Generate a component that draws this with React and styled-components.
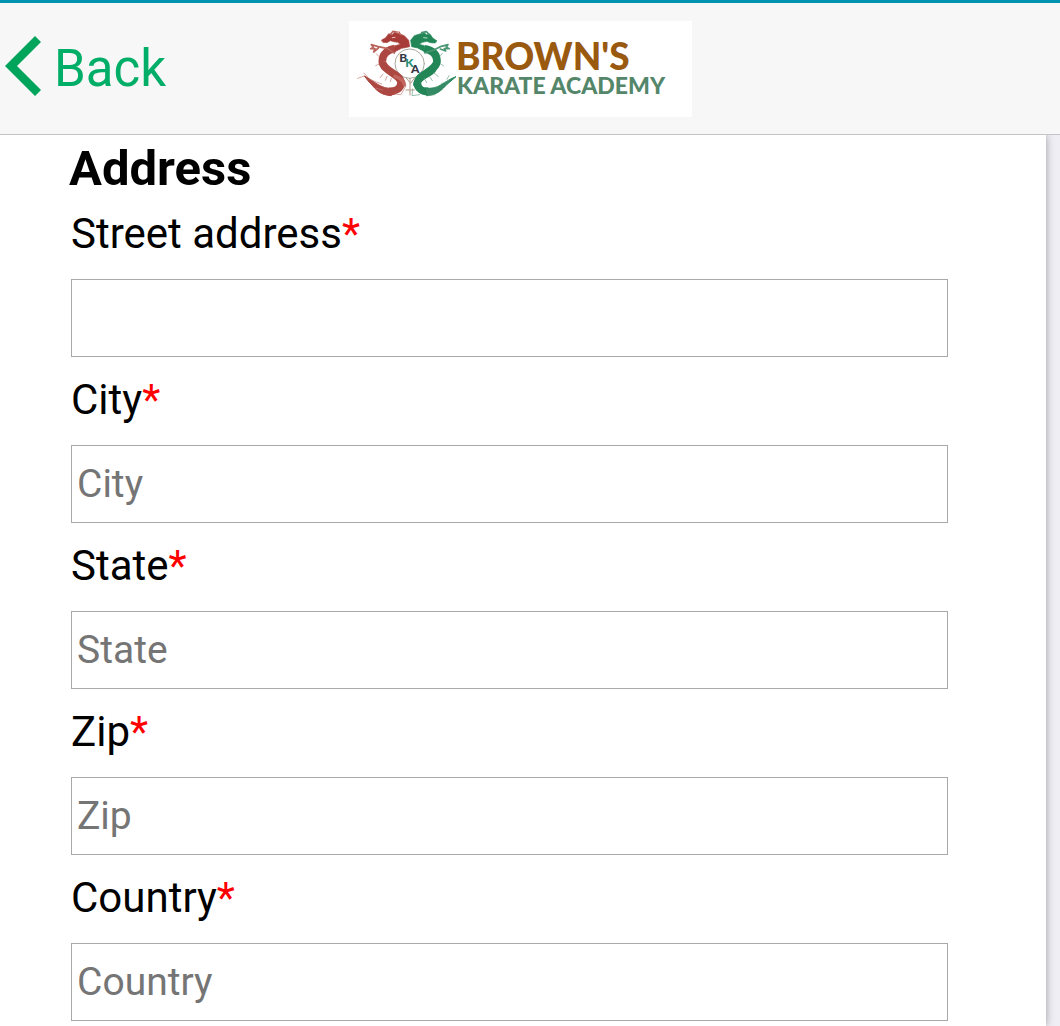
import React from "react";
import styled, { createGlobalStyle } from "styled-components";

const GlobalStyle = createGlobalStyle`
  *, *::before, *::after { box-sizing: border-box; }
  body {
    margin: 0;
    background: #efeef4;
    color: #000;
    font-family: Roboto, "Liberation Sans", sans-serif;
  }
`;

const Page = styled.div`
  display: flex;
  flex-direction: column;
  height: 100vh;
  overflow: hidden;
`;

const Header = styled.header`
  position: relative;
  z-index: 1;
  display: grid;
  grid-template-columns: 1fr auto 1fr;
  align-items: center;
  flex: none;
  height: 135px;
  padding-right: 20px;
  border-top: 3px solid #0093b2;
  border-bottom: 1px solid #c4c4c4;
  background: #f7f7f7;
`;

const BackButton = styled.button`
  display: flex;
  align-items: center;
  justify-self: start;
  gap: 12px;
  padding: 0 0 0 5px;
  border: 0;
  background: none;
  color: #00ae68;
  font: 400 51px/60px Roboto, sans-serif;
  cursor: pointer;
`;

const Logo = styled.svg`
  display: block;
  width: 343px;
  height: 96px;
  background: #fff;
`;

const LogoText = styled.text`
  font-family: Lato, sans-serif;
  font-weight: 900;
  font-size: ${(p) => p.$size}px;
`;

const Sheet = styled.main`
  flex: 1;
  min-height: 0;
  overflow: hidden;
  margin-right: 14px;
  padding: 0 98px 0 71px;
  background: #fff;
  box-shadow: 0 0 8px rgba(0, 0, 0, 0.35);
`;

const Title = styled.h1`
  margin: 0 0 0 -2px;
  font-size: 49px;
  font-weight: 700;
  line-height: 68px;
`;

const Field = styled.div`
  display: flex;
  flex-direction: column;
  gap: 17px;
  padding: 3px 0 12px;
`;

const Label = styled.label`
  font-size: 42px;
  line-height: 56px;
`;

const Required = styled.span`
  color: #f00;
`;

const Input = styled.input`
  width: 100%;
  height: 78px;
  padding: 0 5px;
  border: 1px solid #a9a9a9;
  border-radius: 0;
  background: #fff;
  color: #000;
  font: 400 39px/46px Roboto, sans-serif;

  &::placeholder {
    color: #757575;
    opacity: 1;
  }
`;

const fields = [
  { id: "street", label: "Street address", placeholder: "" },
  { id: "city", label: "City", placeholder: "City" },
  { id: "state", label: "State", placeholder: "State" },
  { id: "zip", label: "Zip", placeholder: "Zip" },
  { id: "country", label: "Country", placeholder: "Country" },
];

function Chevron() {
  return (
    <svg width="37" height="66" viewBox="0 0 37 66" aria-hidden="true">
      <path d="M30 0 36 6 12 30 36 54 30 60 0 30Z" fill="#00a45b" />
    </svg>
  );
}

function LogoMark() {
  return (
    <g transform="translate(-4 -6) scale(.33333)" fill="none" strokeLinecap="round" strokeLinejoin="round">
      <circle cx="194" cy="146" r="44" fill="#fff" stroke="#a8a99a" strokeWidth="3" />
      <g stroke="#ad4742">
        <path d="M150 101C128 104 111 117 112 140C114 168 168 178 168 203C168 221 150 229 132 230" strokeWidth="23" strokeLinecap="butt" />
        <path d="M150 184C166 190 178 196 178 210" strokeWidth="10" stroke="#c2655d" />
        <path d="M144 219C108 226 84 194 58 183L72 201C88 215 98 240 138 242Z" fill="#ad4742" strokeWidth="3" />
        <path d="M110 75 122 68 131 56 142 59 148 52 162 56 178 62 191 76 194 95 180 98 170 100 146 112 150 92 166 88 158 82 146 80 136 77 126 83 114 82Z" fill="#a83c39" strokeWidth="2" />
        <path d="M137 58 144 49 156 51M166 59 162 51M97 94 128 101 148 114M97 94 79 89 85 97 77 101 90 101 86 111 100 99" strokeWidth="5" stroke="#b9655c" />
        <path d="M142 68 150 67" stroke="#e9c0b8" strokeWidth="3" />
        <path d="M74 193 94 201 110 207M58 183 38 190M67 185 57 174M101 124 94 116M101 148 92 152M114 177 105 188M126 184 121 196M139 190 136 200M151 237 168 239 183 212M113 225 94 220" strokeWidth="2" stroke="#c07a72" />
      </g>
      <g stroke="#238657">
        <path d="M238 101C262 105 276 117 276 139C274 168 220 178 217 203C217 220 232 230 250 230" strokeWidth="23" strokeLinecap="butt" />
        <path d="M264 166C250 182 222 186 213 207" strokeWidth="17" />
        <path d="M242 219C282 226 296 198 333 185L306 208C293 222 278 240 246 242Z" fill="#348a65" strokeWidth="3" />
        <path d="M275 77 263 69 255 57 244 59 238 53 224 57 208 62 197 76 200 95 218 99 242 112 238 92 222 88 232 82 246 79 256 83 270 84Z" fill="#238657" strokeWidth="2" />
        <path d="M252 58 244 50 230 53M240 114 268 104 289 94M289 94 309 89 304 97 313 101 298 101 302 108 286 102" strokeWidth="5" stroke="#4a9673" />
        <path d="M236 68 246 69" stroke="#b5dccb" strokeWidth="3" />
        <path d="M306 193 312 182M288 207 312 196M286 123 292 115M286 146 296 153M267 174 280 185M253 184 262 197M238 190 245 203M203 221 201 242 224 239M249 242 270 239" strokeWidth="2" stroke="#63a486" />
      </g>
      <path d="M195 190V240M183 225 208 225M184 190 197 205 208 190" stroke="#b09a88" strokeWidth="3" />
      <g stroke="none" fontFamily="Lato" fontWeight="900" fontSize="36">
        <text x="163" y="140" fill="#333942">B</text>
        <text x="181" y="157" fill="#258e75">K</text>
        <text x="198" y="173" fill="#33343e">A</text>
      </g>
    </g>
  );
}

export default function App() {
  return (
    <>
      <GlobalStyle />
      <Page>
        <Header>
          <BackButton type="button">
            <Chevron />
            Back
          </BackButton>
          <Logo viewBox="0 0 343 96" role="img" aria-label="Brown's Karate Academy">
            <LogoMark />
            <LogoText x="107" y="49" $size={37} fill="#99590f">BROWN'S</LogoText>
            <LogoText x="108" y="73" $size={23} fill="#54866a">KARATE ACADEMY</LogoText>
          </Logo>
        </Header>
        <Sheet>
          <Title>Address</Title>
          <form>
            {fields.map((f) => (
              <Field key={f.id}>
                <Label htmlFor={f.id}>
                  {f.label}
                  <Required>*</Required>
                </Label>
                <Input id={f.id} name={f.id} type="text" placeholder={f.placeholder} required />
              </Field>
            ))}
          </form>
        </Sheet>
      </Page>
    </>
  );
}
